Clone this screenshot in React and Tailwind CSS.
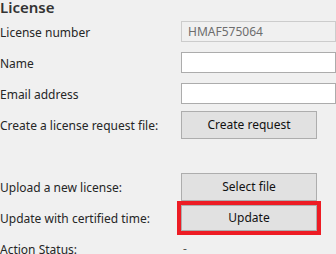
// License panel – Windows-style form
const Row = ({ label, children }) => {
    return (
        <div className="flex items-center h-[31px]">
            <div className="w-[181px] shrink-0 pt-[2px] text-[12px] text-[#262626]">{label}</div>
            {children}
        </div>
    );
};

const Button = ({ children, className = "" }) => {
    return (
        <button className={"w-[136px] bg-[#e1e1e1] border border-[#adadad] text-[12px] text-[#111] " + className}>
            {children}
        </button>
    );
};

export default function App() {
    return (
        <div className="w-[336px] h-[254px] overflow-hidden bg-[#f0f0f0] font-['Noto_Sans',sans-serif]">
            <div className="h-[16px] text-[15px] leading-[14px] font-semibold text-[#333]">License</div>

            <Row label="License number">
                <div className="w-[155px] h-[21px] bg-[#f0f0f0] border border-[#cccccc] pl-[6px] flex items-center text-[12px] text-[#6d6d6d]">
                    HMAF575064
                </div>
            </Row>
            <Row label="Name">
                <input className="w-[155px] h-[21px] bg-white border border-[#acacac] outline-none" />
            </Row>
            <Row label="Email address">
                <input className="w-[155px] h-[21px] bg-white border border-[#acacac] outline-none" />
            </Row>
            <Row label="Create a license request file:">
                <Button className="h-[28px]">Create request</Button>
            </Row>

            <div className="h-[31px]" />

            <Row label="Upload a new license:">
                <Button className="h-[28px]">Select file</Button>
            </Row>
            <Row label="Update with certified time:">
                <div className="-ml-[4px] border-4 border-[#ed1c24] h-[34px] flex">
                    <Button className="h-[26px]">Update</Button>
                </div>
            </Row>
            <Row label="Action Status:">
                <span className="text-[12px] text-[#555] pl-[2px]">-</span>
            </Row>
        </div>
    );
}
